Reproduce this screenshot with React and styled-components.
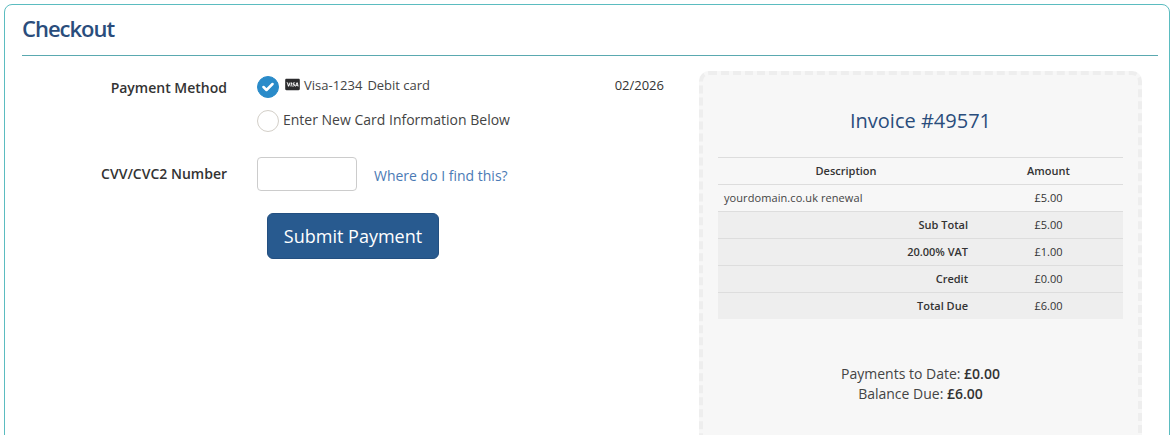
import React from 'react';
import styled, { createGlobalStyle } from 'styled-components';
import { FaCcVisa } from 'react-icons/fa';

const Global = createGlobalStyle`
  html, body { margin: 0; padding: 0; background: #fff; }
  body { font-family: "Open Sans", "Liberation Sans", sans-serif; font-size: 14px; color: #333; }
`;

const Page = styled.div`
  height: 435px;
  overflow: hidden;
  box-sizing: border-box;
  padding: 4px 5px 0 4px;
`;

const Card = styled.div`
  border: 1px solid #5bbcc0;
  border-radius: 8px;
  background: #fff;
  padding: 0 11px 0 17px;
  height: 460px;
  box-sizing: border-box;
`;

const Title = styled.h1`
  margin: 0;
  height: 51px;
  line-height: 47px;
  box-sizing: border-box;
  font-size: 22px;
  font-weight: 600;
  letter-spacing: -1px;
  color: #2a4d7c;
  border-bottom: 1px solid #5aa9b0;
`;

const Columns = styled.div`
  display: flex;
  padding-top: 15px;
`;

const FormCol = styled.div`
  width: 642px;
  flex: none;
  padding-top: 5px;
`;

const Row = styled.div`
  display: grid;
  grid-template-columns: 205px 1fr;
  column-gap: 30px;
  margin-bottom: ${(p) => p.$mb || 0}px;
`;

const Label = styled.div`
  text-align: right;
  font-weight: 600;
  font-size: 14px;
  line-height: 20px;
  color: #333;
  padding-top: ${(p) => p.$pt || 0}px;
`;

const Options = styled.div`
  display: flex;
  flex-direction: column;
  gap: 12px;
`;

const Option = styled.div`
  display: flex;
  align-items: flex-start;
  height: 22px;
  font-size: 14px;
  line-height: 19px;
`;

const Radio = styled.span`
  width: 22px;
  height: 22px;
  box-sizing: border-box;
  border-radius: 50%;
  flex: none;
  display: flex;
  align-items: center;
  justify-content: center;
  background: ${(p) => (p.$on ? '#2a8bc9' : '#fff')};
  border: 1px solid ${(p) => (p.$on ? '#2a8bc9' : '#d3cfc8')};
`;

const CardIcon = styled(FaCcVisa)`
  width: 15px;
  height: 13px;
  margin: 2px 4px 0 6px;
  flex: none;
  color: #2b2b2d;
`;

const CardName = styled.span`
  margin-right: 5px;
  color: #444;
  font-size: 13px;
`;

const CardType = styled.span`
  color: #444;
  font-size: 13px;
`;

const Expiry = styled.span`
  margin-left: auto;
  font-size: 13px;
  color: #333;
`;

const NewCard = styled.span`
  margin-left: 4px;
  color: #444;
`;

const CvvRow = styled.div`
  display: flex;
  align-items: center;
`;

const CvvInput = styled.input`
  width: 100px;
  height: 34px;
  box-sizing: border-box;
  border: 1px solid #ccc;
  border-radius: 4px;
  background: #fff;
  outline: none;
`;

const Help = styled.a`
  margin-left: 17px;
  color: #4b7ab5;
  font-size: 14px;
  text-decoration: none;
  padding-top: 3px;
`;

const Submit = styled.button`
  display: block;
  margin: 22px 0 0 245px;
  width: 172px;
  height: 46px;
  border: 1px solid #234f80;
  border-radius: 6px;
  background: #285a8f;
  color: #fff;
  font-family: inherit;
  font-size: 18px;
  padding: 0;
`;

const Invoice = styled.div`
  width: 443px;
  height: 400px;
  margin-left: 35px;
  box-sizing: border-box;
  flex: none;
  background: #f7f7f7;
  border: 4px dashed #eee;
  border-radius: 10px;
  padding: 0 15px;
`;

const InvoiceTitle = styled.h2`
  margin: 0;
  height: 82px;
  padding-top: 31px;
  box-sizing: border-box;
  text-align: center;
  font-size: 20px;
  line-height: 30px;
  font-weight: 400;
  color: #2a4d7c;
`;

const Table = styled.table`
  width: 405px;
  border-collapse: collapse;
  table-layout: fixed;
  font-size: 11px;

  tr:last-child td {
    height: 26px;
  }
`;

const Cell = styled.td`
  height: 27px;
  padding: 0 6px 1px;
  box-sizing: border-box;
  border-top: 1px solid #ddd;
  text-align: ${(p) => p.$align || 'center'};
  font-weight: ${(p) => p.$weight || 400};
  background: ${(p) => (p.$shade ? '#eeeeee' : 'transparent')};
  color: #333;
`;

const DomainText = styled.span`
  letter-spacing: 0.08px;
  color: #444;
`;

const Balance = styled.div`
  margin-top: 45px;
  text-align: center;
  font-size: 14px;
  line-height: 20px;
  color: #444;
  b { font-weight: 600; color: #333; }
`;

const totals = [
  ['Sub Total', '£5.00'],
  ['20.00% VAT', '£1.00'],
  ['Credit', '£0.00'],
  ['Total Due', '£6.00'],
];

export default function App() {
  return (
    <Page>
      <Global />
      <Card>
        <Title>Checkout</Title>
        <Columns>
          <FormCol>
            <Row $mb={25}>
              <Label $pt={2}>Payment Method</Label>
              <Options>
                <Option>
                  <Radio $on>
                    <svg width="12" height="10" viewBox="0 0 12 10" fill="none">
                      <path d="M1.5 5l3 3 6-6" stroke="#fff" strokeWidth="2.5" strokeLinecap="round" strokeLinejoin="round" />
                    </svg>
                  </Radio>
                  <CardIcon />
                  <CardName>Visa-1234</CardName>
                  <CardType>Debit card</CardType>
                  <Expiry>02/2026</Expiry>
                </Option>
                <Option>
                  <Radio />
                  <NewCard>Enter New Card Information Below</NewCard>
                </Option>
              </Options>
            </Row>
            <Row>
              <Label $pt={7}>CVV/CVC2 Number</Label>
              <CvvRow>
                <CvvInput />
                <Help>Where do I find this?</Help>
              </CvvRow>
            </Row>
            <Submit>Submit Payment</Submit>
          </FormCol>
          <Invoice>
            <InvoiceTitle>Invoice #49571</InvoiceTitle>
            <Table>
              <colgroup>
                <col width="256" />
                <col width="149" />
              </colgroup>
              <tbody>
                <tr>
                  <Cell $weight={600}>Description</Cell>
                  <Cell $weight={600}>Amount</Cell>
                </tr>
                <tr>
                  <Cell $align="left"><DomainText>yourdomain.co.uk renewal</DomainText></Cell>
                  <Cell>£5.00</Cell>
                </tr>
                {totals.map(([name, value]) => (
                  <tr key={name}>
                    <Cell $shade $weight={600} $align="right">{name}</Cell>
                    <Cell $shade>{value}</Cell>
                  </tr>
                ))}
              </tbody>
            </Table>
            <Balance>
              Payments to Date: <b>£0.00</b>
              <br />
              Balance Due: <b>£6.00</b>
            </Balance>
          </Invoice>
        </Columns>
      </Card>
    </Page>
  );
}
